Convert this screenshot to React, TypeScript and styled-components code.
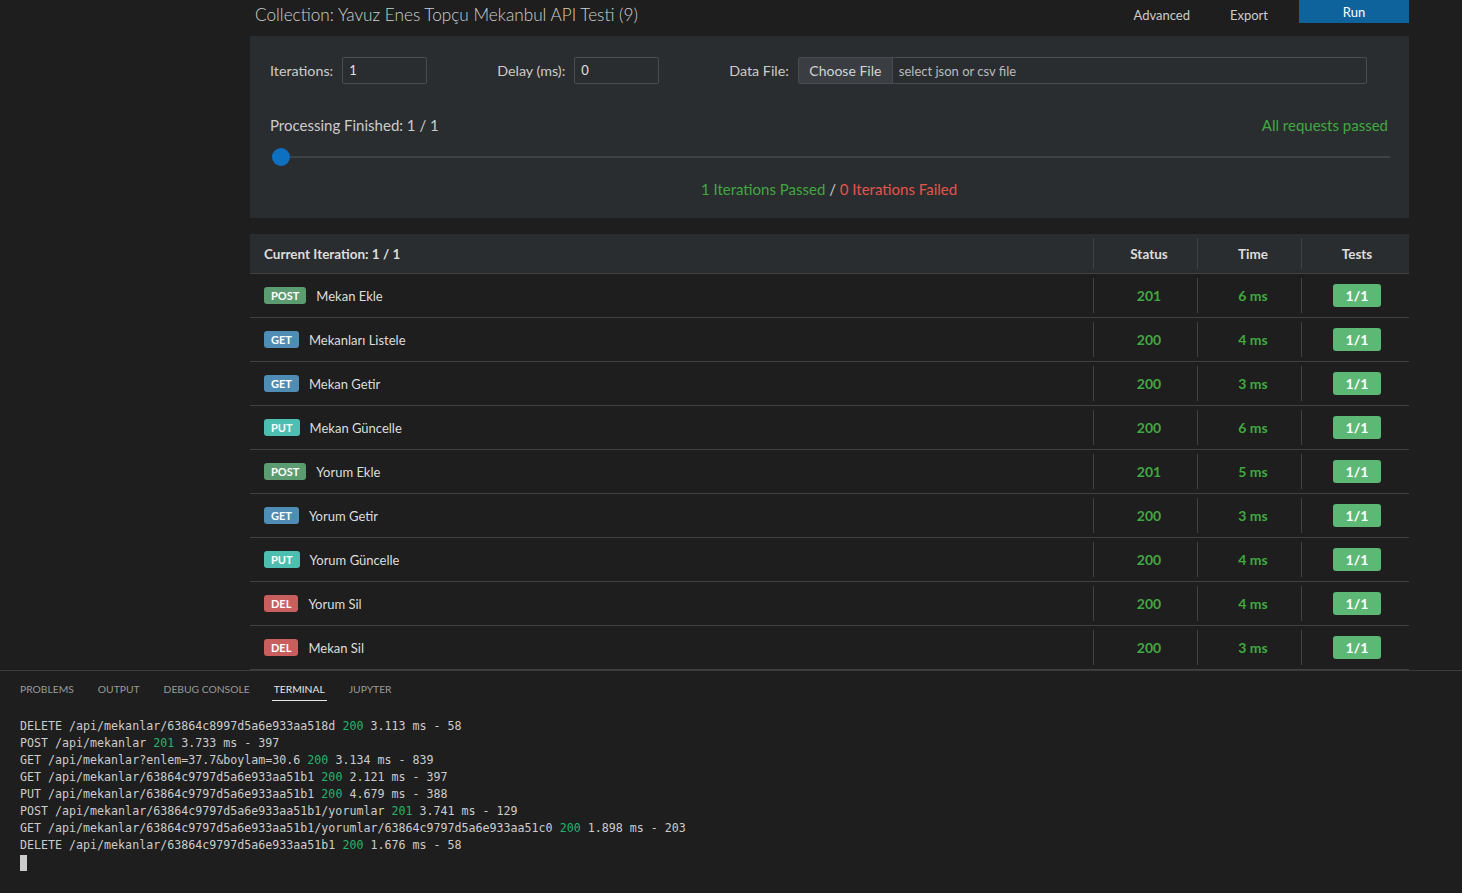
import React from "react";
import styled, { createGlobalStyle } from "styled-components";

const Global = createGlobalStyle`
  html, body { margin: 0; padding: 0; background: #1e1e1e; }
  body { width: 1462px; height: 893px; overflow: hidden; font-family: "Lato", "Noto Sans", sans-serif; }
  * { box-sizing: border-box; }
`;

const Page = styled.div`
  display: flex;
  flex-direction: column;
  width: 1462px;
  height: 893px;
  background: #1e1e1e;
`;

const Webview = styled.div`
  height: 670px;
  overflow: hidden;
  padding-left: 250px;
`;

const Content = styled.div`
  width: 1159px;
  display: flex;
  flex-direction: column;
`;

const TopBar = styled.div`
  height: 36px;
  display: flex;
  align-items: flex-start;
`;

const Title = styled.div`
  flex: 1;
  padding-left: 5px;
  font-size: 17.2px;
  line-height: 30px;
  color: #cfcfcf;
  font-weight: 300;
`;

const TopLink = styled.div<{ $mr: number }>`
  font-size: 13px;
  line-height: 31px;
  color: #cccccc;
  margin-right: ${(p) => p.$mr}px;
`;

const RunButton = styled.div`
  width: 110px;
  height: 23px;
  background: #0e639c;
  color: #ffffff;
  font-size: 13px;
  line-height: 24px;
  text-align: center;
`;

const Settings = styled.div`
  background: #2a2d2f;
  height: 182px;
  padding: 21px 21px 0 20px;
  display: flex;
  flex-direction: column;
`;

const InputRow = styled.div`
  display: flex;
  align-items: center;
  height: 27px;
`;

const Field = styled.div<{ $grow?: boolean }>`
  display: flex;
  align-items: center;
  gap: 9px;
  margin-right: ${(p) => (p.$grow ? "21px" : "70px")};
  flex: ${(p) => (p.$grow ? 1 : "none")};
`;

const Label = styled.span`
  font-size: 14.3px;
  color: #cccccc;
`;

const TextInput = styled.div`
  width: 85px;
  height: 27px;
  border: 1px solid #4a4d50;
  border-radius: 2px;
  background: #2a2d2f;
  color: #e0e0e0;
  font-size: 13px;
  line-height: 25px;
  padding-left: 6px;
`;

const FileInput = styled.div`
  flex: 1;
  height: 27px;
  border: 1px solid #4a4d50;
  border-radius: 2px;
  display: flex;
  align-items: stretch;
  overflow: hidden;
`;

const ChooseBtn = styled.div`
  width: 94px;
  background: #3a3d41;
  border-right: 1px solid #4a4d50;
  color: #d4d4d4;
  font-size: 14px;
  line-height: 25px;
  text-align: center;
`;

const FileHint = styled.div`
  padding-left: 6px;
  color: #bbbbbb;
  font-size: 13px;
  line-height: 26px;
`;

const StatusRow = styled.div`
  display: flex;
  justify-content: space-between;
  align-items: center;
  margin-top: 29px;
  height: 24px;
`;

const ProcText = styled.span`
  font-size: 15px;
  color: #cccccc;
`;

const Green = styled.span`
  color: #3fa93f;
`;

const Red = styled.span`
  color: #e5534b;
`;

const Muted = styled.span`
  color: #cccccc;
`;

const AllPassed = styled.span`
  font-size: 15px;
  color: #3fa93f;
`;

const SliderRow = styled.div`
  position: relative;
  height: 18px;
  margin-top: 11px;
  margin-left: 2px;
  margin-right: -2px;
  display: flex;
  align-items: center;
`;

const Track = styled.div`
  flex: 1;
  height: 2px;
  margin-left: 9px;
  background: #3e4245;
`;

const Thumb = styled.div`
  position: absolute;
  left: 0;
  top: 0;
  width: 18px;
  height: 18px;
  border-radius: 50%;
  background: #0e70c0;
`;

const Summary = styled.div`
  margin-top: 14px;
  text-align: center;
  font-size: 15px;
`;

const Table = styled.div`
  margin-top: 16px;
  display: flex;
  flex-direction: column;
`;

const Row = styled.div<{ $head?: boolean }>`
  display: grid;
  grid-template-columns: 843px 104px 104px 108px;
  height: ${(p) => (p.$head ? "40px" : "44px")};
  border-bottom: 1px solid #414141;
  background: ${(p) => (p.$head ? "#2a2d2f" : "transparent")};
`;

const Cell = styled.div<{ $center?: boolean; $shift?: number; $divider?: boolean; $head?: boolean }>`
  position: relative;
  display: flex;
  align-items: center;
  justify-content: ${(p) => (p.$center ? "center" : "flex-start")};
  padding-left: ${(p) => (p.$center ? `${p.$shift ?? 8}px` : "14px")};
  font-size: ${(p) => (p.$head ? "13.5px" : "13px")};
  font-weight: ${(p) => (p.$head ? 700 : 400)};
  color: #dddddd;
  &::before {
    content: "";
    display: ${(p) => (p.$divider ? "block" : "none")};
    position: absolute;
    left: 0;
    top: 4px;
    bottom: 4px;
    width: 1px;
    background: #414141;
  }
`;

const methodColors: Record<string, string> = {
  POST: "#5b9c71",
  GET: "#4f8db5",
  PUT: "#4dbfb0",
  DEL: "#c95e5e",
};

const Method = styled.span<{ $m: string }>`
  display: inline-block;
  height: 17px;
  line-height: 17px;
  padding: 0 7px;
  border-radius: 3px;
  background: ${(p) => methodColors[p.$m]};
  color: #ffffff;
  font-size: 11px;
  font-weight: 700;
  margin-right: 10px;
`;

const GreenVal = styled.span`
  color: #3fa93f;
  font-weight: 700;
  font-size: 14px;
`;

const TestBadge = styled.span`
  width: 48px;
  height: 23px;
  border-radius: 3px;
  background: #5cb874;
  color: #ffffff;
  font-weight: 700;
  font-size: 14px;
  line-height: 23px;
  text-align: center;
`;

const Terminal = styled.div`
  flex: 1;
  border-top: 1px solid #3a3a3a;
  display: flex;
  flex-direction: column;
  padding-left: 20px;
`;

const Tabs = styled.div`
  display: flex;
  height: 33px;
  align-items: flex-start;
  padding-top: 11px;
`;

const Tab = styled.div<{ $active?: boolean }>`
  font-size: 10.3px;
  color: ${(p) => (p.$active ? "#e7e7e7" : "#9a9a9a")};
  margin-right: 22px;
  height: 19px;
  line-height: 14px;
  padding: 0 2px;
  margin-left: -2px;
  border-bottom: ${(p) => (p.$active ? "1px solid #e7e7e7" : "1px solid transparent")};
`;

const Lines = styled.div`
  margin-top: 14px;
  font-family: "DejaVu Sans Mono", "Liberation Mono", monospace;
  font-size: 11.65px;
  line-height: 17px;
  color: #cccccc;
  white-space: pre;
`;

const Code = styled.span`
  color: #23b46b;
`;

const Cursor = styled.div`
  width: 7px;
  height: 16px;
  margin-top: 1px;
  background: #cccccc;
`;

const rows = [
  { m: "POST", name: "Mekan Ekle", status: "201", time: "6 ms" },
  { m: "GET", name: "Mekanları Listele", status: "200", time: "4 ms" },
  { m: "GET", name: "Mekan Getir", status: "200", time: "3 ms" },
  { m: "PUT", name: "Mekan Güncelle", status: "200", time: "6 ms" },
  { m: "POST", name: "Yorum Ekle", status: "201", time: "5 ms" },
  { m: "GET", name: "Yorum Getir", status: "200", time: "3 ms" },
  { m: "PUT", name: "Yorum Güncelle", status: "200", time: "4 ms" },
  { m: "DEL", name: "Yorum Sil", status: "200", time: "4 ms" },
  { m: "DEL", name: "Mekan Sil", status: "200", time: "3 ms" },
];

const logs: [string, string, string][] = [
  ["DELETE /api/mekanlar/63864c8997d5a6e933aa518d ", "200", " 3.113 ms - 58"],
  ["POST /api/mekanlar ", "201", " 3.733 ms - 397"],
  ["GET /api/mekanlar?enlem=37.7&boylam=30.6 ", "200", " 3.134 ms - 839"],
  ["GET /api/mekanlar/63864c9797d5a6e933aa51b1 ", "200", " 2.121 ms - 397"],
  ["PUT /api/mekanlar/63864c9797d5a6e933aa51b1 ", "200", " 4.679 ms - 388"],
  ["POST /api/mekanlar/63864c9797d5a6e933aa51b1/yorumlar ", "201", " 3.741 ms - 129"],
  ["GET /api/mekanlar/63864c9797d5a6e933aa51b1/yorumlar/63864c9797d5a6e933aa51c0 ", "200", " 1.898 ms - 203"],
  ["DELETE /api/mekanlar/63864c9797d5a6e933aa51b1 ", "200", " 1.676 ms - 58"],
];

export default function App() {
  return (
    <Page>
      <Global />
      <Webview>
        <Content>
          <TopBar>
            <Title>Collection: Yavuz Enes Topçu Mekanbul API Testi (9)</Title>
            <TopLink $mr={40}>Advanced</TopLink>
            <TopLink $mr={31}>Export</TopLink>
            <RunButton>Run</RunButton>
          </TopBar>
          <Settings>
            <InputRow>
              <Field>
                <Label>Iterations:</Label>
                <TextInput>1</TextInput>
              </Field>
              <Field>
                <Label>Delay (ms):</Label>
                <TextInput>0</TextInput>
              </Field>
              <Field $grow>
                <Label>Data File:</Label>
                <FileInput>
                  <ChooseBtn>Choose File</ChooseBtn>
                  <FileHint>select json or csv file</FileHint>
                </FileInput>
              </Field>
            </InputRow>
            <StatusRow>
              <ProcText>Processing Finished: 1 / 1</ProcText>
              <AllPassed>All requests passed</AllPassed>
            </StatusRow>
            <SliderRow>
              <Track />
              <Thumb />
            </SliderRow>
            <Summary>
              <Green>1 Iterations Passed</Green>
              <Muted> / </Muted>
              <Red>0 Iterations Failed</Red>
            </Summary>
          </Settings>
          <Table>
            <Row $head>
              <Cell $head>Current Iteration: 1 / 1</Cell>
              <Cell $head $center $divider>Status</Cell>
              <Cell $head $center $divider>Time</Cell>
              <Cell $head $center $shift={4} $divider>Tests</Cell>
            </Row>
            {rows.map((r, i) => (
              <Row key={i}>
                <Cell>
                  <Method $m={r.m}>{r.m}</Method>
                  {r.name}
                </Cell>
                <Cell $center $divider>
                  <GreenVal>{r.status}</GreenVal>
                </Cell>
                <Cell $center $divider>
                  <GreenVal>{r.time}</GreenVal>
                </Cell>
                <Cell $center $shift={4} $divider>
                  <TestBadge>1/1</TestBadge>
                </Cell>
              </Row>
            ))}
          </Table>
        </Content>
      </Webview>
      <Terminal>
        <Tabs>
          <Tab>PROBLEMS</Tab>
          <Tab>OUTPUT</Tab>
          <Tab>DEBUG CONSOLE</Tab>
          <Tab $active>TERMINAL</Tab>
          <Tab>JUPYTER</Tab>
        </Tabs>
        <Lines>
          {logs.map((l, i) => (
            <div key={i}>
              {l[0]}
              <Code>{l[1]}</Code>
              {l[2]}
            </div>
          ))}
          <Cursor />
        </Lines>
      </Terminal>
    </Page>
  );
}
